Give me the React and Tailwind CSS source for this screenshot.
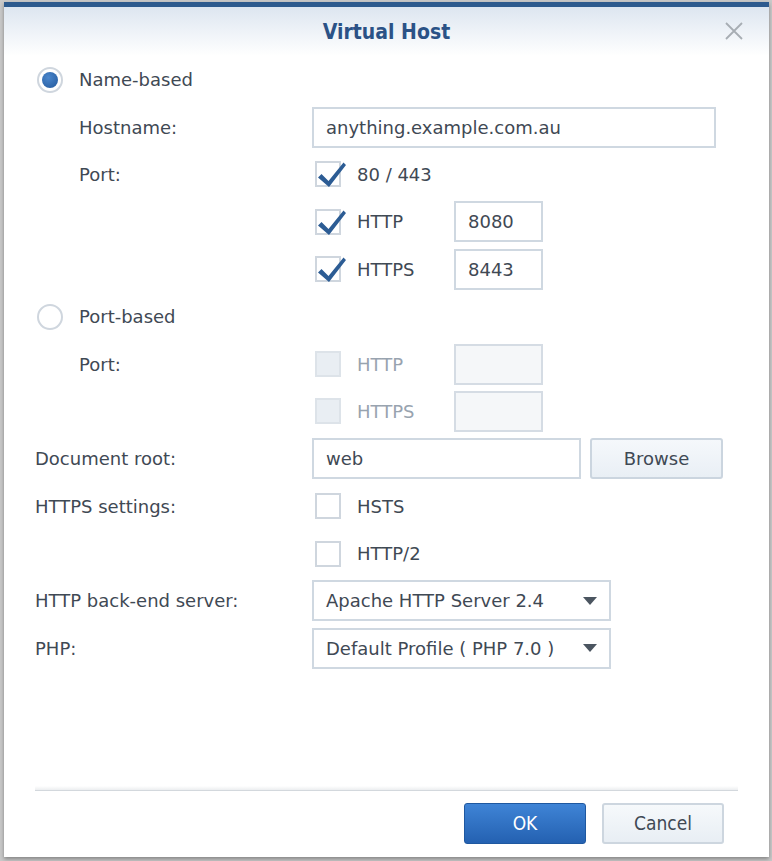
import { useState } from "react";

const bodyFont = { fontFamily: '"DejaVu Sans", Verdana, sans-serif' };
const titleFont = { fontFamily: '"DejaVu Sans Condensed", "DejaVu Sans", sans-serif' };

function Radio({ checked, label }) {
  return (
    <div className="flex items-center">
      <span className="ml-[33px] grid h-[26px] w-[26px] place-items-center rounded-full border-2 border-[#cfd6de] bg-white">
        {checked ? <span className="h-[16px] w-[16px] rounded-full bg-[radial-gradient(circle_at_40%_35%,#4a86cc,#23599c)]" /> : null}
      </span>
      <span className="ml-[16px] text-[#3f4954]">{label}</span>
    </div>
  );
}

function Check({ checked, disabled, label }) {
  return (
    <div className="flex items-center">
      <span
        className={`relative ml-[3px] h-[26px] w-[26px] border-2 ${
          disabled ? "border-[#dde3e9] bg-[#e9eef3]" : "border-[#cfd6de] bg-white"
        }`}
      >
        {checked ? (
          <svg className="absolute -left-[2px] -top-[7px] h-[34px] w-[34px] overflow-visible" viewBox="0 0 34 34">
            <path d="M3 21.5 L6.5 18 L13.5 25 L28.5 6.5 L31 9 L14 31 Z" fill="#2c5c94" />
          </svg>
        ) : null}
      </span>
      <span className={`ml-[16px] ${disabled ? "text-[#98a3af]" : "text-[#3f4954]"}`}>{label}</span>
    </div>
  );
}

function TextBox({ value, width, disabled }) {
  return (
    <div
      className={`flex h-[41px] items-center border-2 px-[12px] ${
        disabled ? "border-[#d5dce4] bg-[#f5f7f9]" : "border-[#cfd8e1] bg-white"
      } ${width}`}
    >
      <span className="text-[#3f4954]">{value}</span>
    </div>
  );
}

function Select({ value }) {
  return (
    <div className="flex h-[41px] w-[299px] items-center justify-between border-2 border-[#cfd8e1] bg-white pl-[12px] pr-[12px]">
      <span className="text-[#3f4954]">{value}</span>
      <svg width="14" height="8" viewBox="0 0 14 8">
        <path d="M0 0 H14 L7 8 Z" fill="#4b5560" />
      </svg>
    </div>
  );
}

function Row({ label, indent, children }) {
  return (
    <div className="flex h-[47.4px] items-center">
      <div className={`w-[277px] shrink-0 text-[#3f4954] ${indent ? "pl-[44px]" : ""}`}>{label}</div>
      <div className="flex items-center">{children}</div>
    </div>
  );
}

function PortRow({ label, checked, value, disabled }) {
  return (
    <div className="flex items-center">
      <div className="w-[142px]">
        <Check checked={checked} disabled={disabled} label={label} />
      </div>
      <TextBox value={value} width="w-[89px]" disabled={disabled} />
    </div>
  );
}

export default function App() {
  const [mode] = useState("name");

  return (
    <div className="min-h-[861px] w-[772px] bg-[#c9c9c9] pl-[4px] pt-[2px]" style={bodyFont}>
      <div className="flex h-[855px] w-[765px] flex-col border-t-[5px] border-[#2d5a8e] bg-white text-[18px] shadow-[0_2px_4px_rgba(0,0,0,0.35)]">
        <div className="relative flex h-[49px] shrink-0 items-center justify-center bg-gradient-to-b from-[#dde6f0] to-white pt-[2px]">
          <h1 className="text-[21px] font-bold text-[#2b5286]" style={titleFont}>
            Virtual Host
          </h1>
          <button className="absolute right-[26px] top-[15px] text-[#a7adb3]" aria-label="Close">
            <svg width="18" height="18" viewBox="0 0 18 18">
              <path d="M1 1 L17 17 M17 1 L1 17" stroke="currentColor" strokeWidth="1.8" fill="none" />
            </svg>
          </button>
        </div>

        <div className="flex flex-1 flex-col pl-[31px]">
          <div className="flex h-[47.4px] items-center -ml-[31px]">
            <Radio checked={mode === "name"} label="Name-based" />
          </div>
          <Row label="Hostname:" indent>
            <TextBox value="anything.example.com.au" width="w-[404px]" />
          </Row>
          <Row label="Port:" indent>
            <Check checked label="80 / 443" />
          </Row>
          <Row indent>
            <PortRow label="HTTP" checked value="8080" />
          </Row>
          <Row indent>
            <PortRow label="HTTPS" checked value="8443" />
          </Row>
          <div className="flex h-[47.4px] items-center -ml-[31px]">
            <Radio checked={mode === "port"} label="Port-based" />
          </div>
          <Row label="Port:" indent>
            <PortRow label="HTTP" disabled value="" />
          </Row>
          <Row indent>
            <PortRow label="HTTPS" disabled value="" />
          </Row>
          <Row label="Document root:">
            <TextBox value="web" width="w-[269px]" />
            <button className="ml-[9px] h-[41px] w-[133px] rounded-[3px] border-2 border-[#cbd5df] bg-gradient-to-b from-[#f5f8fb] to-[#e9eff5] text-[#3f4954]">
              Browse
            </button>
          </Row>
          <Row label="HTTPS settings:">
            <Check label="HSTS" />
          </Row>
          <Row>
            <Check label="HTTP/2" />
          </Row>
          <Row label="HTTP back-end server:">
            <Select value="Apache HTTP Server 2.4" />
          </Row>
          <Row label="PHP:">
            <Select value="Default Profile ( PHP 7.0 )" />
          </Row>

          <div className="flex-1" />

          <div className="mr-[31px] h-[5px] border-b border-[#d3d8dd] bg-gradient-to-b from-white to-[#eceef0]" />
          <div className="mr-[45px] flex h-[66px] items-start justify-end gap-[16px] pt-[12px]" style={titleFont}>
            <button className="h-[41px] w-[122px] rounded-[3px] border border-[#1f58a0] bg-gradient-to-b from-[#3f84d6] to-[#2461b1] text-[19px] text-white">
              OK
            </button>
            <button className="h-[41px] w-[122px] rounded-[3px] border-2 border-[#cdd6df] bg-gradient-to-b from-[#f6f9fb] to-[#e8eef4] text-[19px] text-[#3f4954]">
              Cancel
            </button>
          </div>
        </div>
      </div>
    </div>
  );
}
